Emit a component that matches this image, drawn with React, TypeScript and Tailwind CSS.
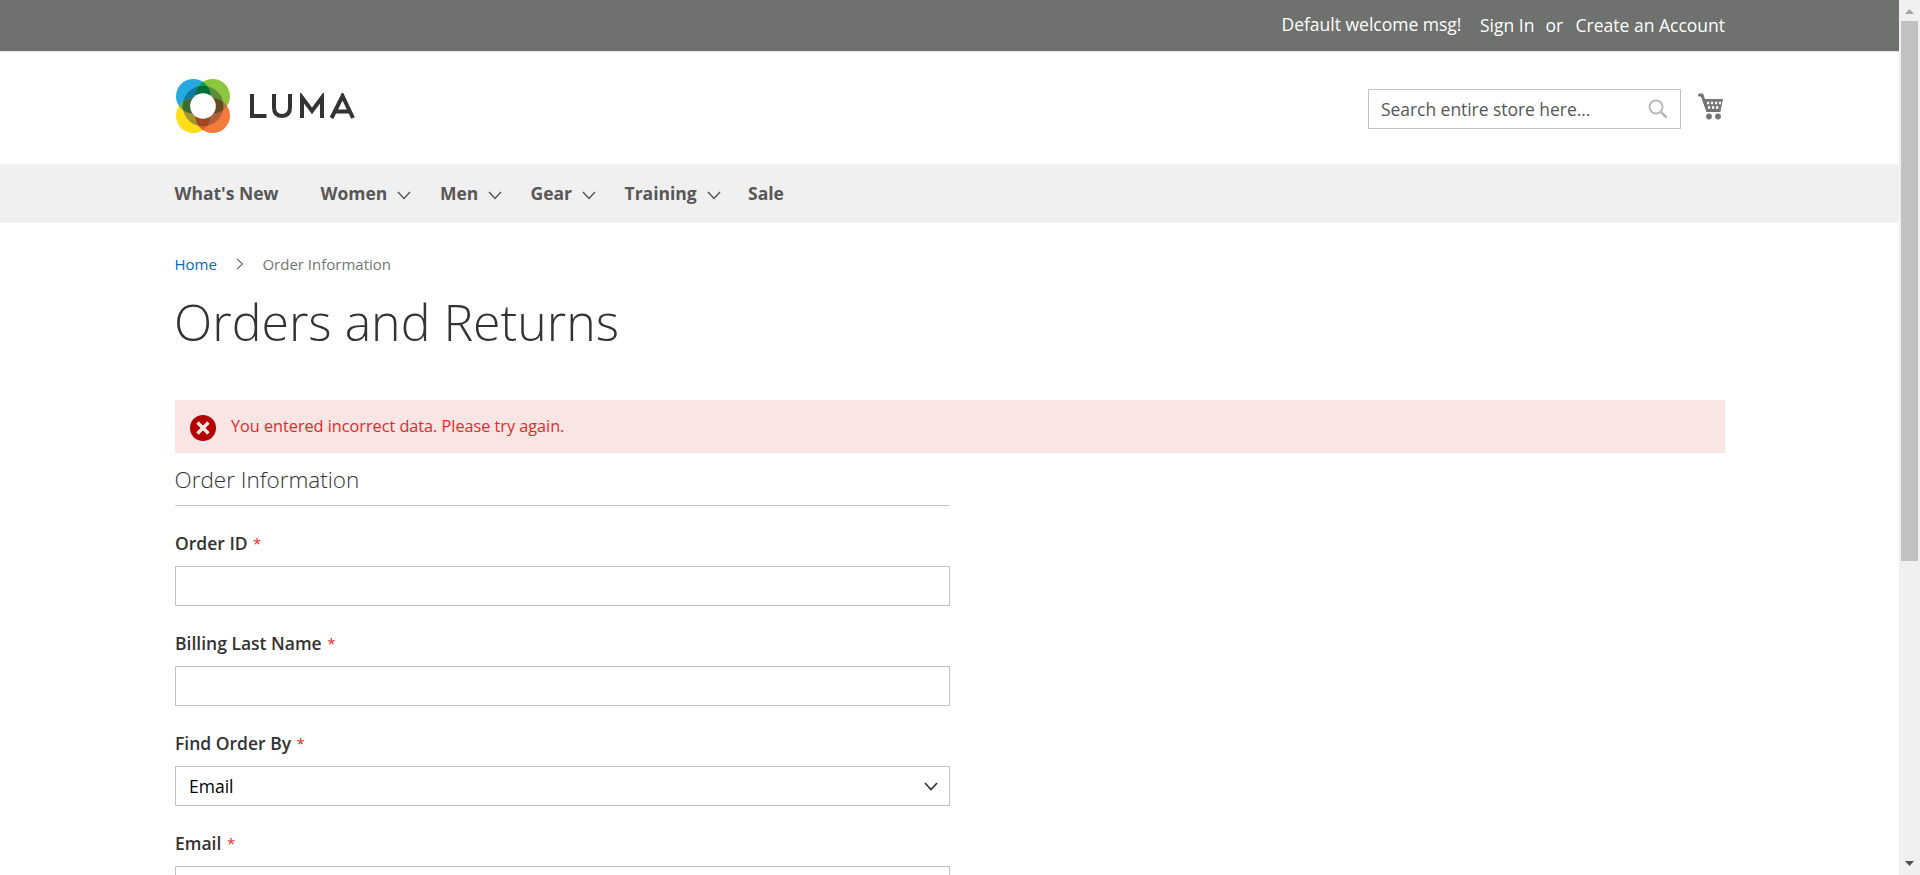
import React from "react";

function Chevron({ className, points = "1,1 7,7.5 13,1", w = 14, h = 9, sw = 1.5 }: { className?: string; points?: string; w?: number; h?: number; sw?: number }) {
  return (
    <svg width={w} height={h} viewBox={`0 0 ${w} ${h}`} className={className} fill="none" stroke="currentColor" strokeWidth={sw}>
      <polyline points={points} />
    </svg>
  );
}

function LogoMark() {
  return (
    <svg width="54" height="54" viewBox="0 0 162 162">
      <defs>
        <clipPath id="blue"><circle cx="52" cy="52" r="52" /></clipPath>
        <clipPath id="green"><circle cx="110" cy="52" r="52" /></clipPath>
        <clipPath id="yellow"><circle cx="52" cy="110" r="52" /></clipPath>
        <clipPath id="orange"><circle cx="110" cy="110" r="52" /></clipPath>
      </defs>
      <circle cx="52" cy="52" r="52" fill="#26a9e0" />
      <circle cx="110" cy="52" r="52" fill="#8cc63f" />
      <circle cx="52" cy="110" r="52" fill="#ffde17" />
      <circle cx="110" cy="110" r="52" fill="#f47b3b" />
      <circle cx="110" cy="52" r="52" fill="#00a651" clipPath="url(#blue)" />
      <circle cx="52" cy="110" r="52" fill="#6fae45" clipPath="url(#blue)" />
      <circle cx="110" cy="110" r="52" fill="#b0763a" clipPath="url(#green)" />
      <circle cx="110" cy="110" r="52" fill="#f05a28" clipPath="url(#yellow)" />
      <circle cx="81" cy="81" r="61" fill="#0c7aa3" clipPath="url(#blue)" />
      <circle cx="81" cy="81" r="61" fill="#5b8c3b" clipPath="url(#green)" />
      <circle cx="81" cy="81" r="61" fill="#a8942f" clipPath="url(#yellow)" />
      <circle cx="81" cy="81" r="61" fill="#b0603a" clipPath="url(#orange)" />
      <g clipPath="url(#blue)"><circle cx="81" cy="81" r="61" fill="#006f3a" clipPath="url(#green)" /></g>
      <g clipPath="url(#blue)"><circle cx="81" cy="81" r="61" fill="#3c6b30" clipPath="url(#yellow)" /></g>
      <g clipPath="url(#green)"><circle cx="81" cy="81" r="61" fill="#664a20" clipPath="url(#orange)" /></g>
      <g clipPath="url(#yellow)"><circle cx="81" cy="81" r="61" fill="#a04822" clipPath="url(#orange)" /></g>
      <circle cx="81" cy="81" r="38.5" fill="#fff" />
    </svg>
  );
}

function Wordmark() {
  return (
    <svg width="106" height="26" viewBox="0 0 106 26" fill="none" stroke="#333" strokeWidth="4" role="img" aria-label="LUMA">
      <path d="M3 1V23H17.5" />
      <path d="M25 1V14.500C25 20.500 28 23 33 23S41 20.500 41 14.500V1" />
      <path d="M53 25V4.500L63 18L73 4.500V25" />
      <path d="M82.500 25L93.500 3L104 25M86.500 18.500H100.500" />
    </svg>
  );
}

function CartIcon() {
  return (
    <svg width="26" height="27" viewBox="0 0 26 27" fill="none">
      <path d="M1.500 2H4L9.500 17.500H21" stroke="#757575" strokeWidth="3" strokeLinecap="round" />
      <path d="M5 6H25L22.500 18.500H9Z" fill="#757575" />
      <path d="M9 10H23M10 14.500H22" stroke="#fff" strokeWidth="2.300" strokeDasharray="2.300 1.700" />
      <circle cx="11" cy="23.500" r="2.900" fill="#757575" />
      <circle cx="20" cy="23.500" r="2.900" fill="#757575" />
    </svg>
  );
}

const nav = [
  { label: "What's New", cls: "w-[146px]" },
  { label: "Women", sub: true, cls: "w-[119.500px]" },
  { label: "Men", sub: true, cls: "w-[90.500px]" },
  { label: "Gear", sub: true, cls: "w-[94px]" },
  { label: "Training", sub: true, cls: "w-[123.500px]" },
  { label: "Sale", cls: "" },
];

function Field({ label, children }: { label: string; children?: React.ReactNode }) {
  return (
    <div className="mb-[25px] h-[75px]">
      <label className="flex h-[35px] items-start text-[17.500px] leading-[25px] font-semibold">
        {label}
        <span className="ml-[5.500px] text-[15px] font-normal text-[#e02b27]">*</span>
      </label>
      <div className="flex h-10 items-center justify-between border border-[#c2c2c2] bg-white pr-[11px] pl-[13px]">{children}</div>
    </div>
  );
}

export default function App() {
  return (
    <div className="flex h-[875px] w-[1920px] overflow-hidden bg-white font-['Open_Sans',sans-serif] text-[17.500px] text-[#333]">
      <div className="w-[1899px] shrink-0">
        <div className="h-[52px] border-b border-[#e4e4e4] bg-[#6e716e] pr-[174px] text-white">
          <div className="flex justify-end leading-6">
            <span className="pt-3">Default welcome msg!</span>
            <span className="ml-[18.500px] pt-[13px]">Sign In</span>
            <span className="ml-[11px] pt-[13px]">or</span>
            <span className="ml-[12.500px] pt-[13px]">Create an Account</span>
          </div>
        </div>

        <header className="flex h-[112px] items-start justify-between pr-[175px] pl-[175.500px]">
          <div className="flex items-center pt-[27px]">
            <LogoMark />
            <div className="ml-[19px] h-[26px]"><Wordmark /></div>
          </div>
          <div className="flex items-start pt-[37px]">
            <div className="flex h-10 w-[313px] items-center justify-between border border-[#c2c2c2] pr-3 pl-3 text-[#575757]">
              <span className="tracking-[-0.05px]">Search entire store here...</span>
              <svg width="20" height="20" viewBox="0 0 20 20" fill="none" stroke="#b8b8b8">
                <circle cx="8" cy="8" r="6.500" strokeWidth="2" />
                <path d="M12.800 12.800L18.500 18.500" strokeWidth="2.500" />
              </svg>
            </div>
            <div className="mt-1 ml-[17px]"><CartIcon /></div>
          </div>
        </header>

        <nav className="flex h-[59px] bg-[#f0f0f0] pl-[174.500px] text-[17.500px] leading-[59px] font-bold text-[#575757]">
          {nav.map((n) => (
            <div key={n.label} className={`flex items-center ${n.cls}`}>
              {n.label}
              {n.sub && <Chevron className="mt-[3px] ml-[10px]" />}
            </div>
          ))}
        </nav>

        <main className="pr-[174px] pl-[175px]">
          <div className="flex h-[65px] items-center pt-[17px] text-[15px] leading-5 text-[#757575]">
            <span className="-ml-[0.500px] text-[#006bb4]">Home</span>
            <Chevron w={8} h={12} points="1,1 6.500,6 1,11" sw={1.3} className="mr-[18.500px] ml-[19px]" />
            <span>Order Information</span>
          </div>
          <h1 className="-ml-px h-[112px] text-[50px] leading-[68px] font-light">Orders and Returns</h1>
          <div className="flex h-[53px] items-center bg-[#fae5e5] pl-[15px] text-[16.250px] text-[#e02b27]">
            <svg width="26" height="26" viewBox="0 0 26 26" className="mt-[2px]">
              <circle cx="13" cy="13" r="13" fill="#b30000" />
              <path d="M7.500 7.500L18.500 18.500M18.500 7.500L7.500 18.500" stroke="#fae5e5" strokeWidth="3.500" />
            </svg>
            <span className="ml-[15px] tracking-[-0.020px]">You entered incorrect data. Please try again.</span>
          </div>
          <form className="w-[775px]">
            <h2 className="mb-[25px] h-[53px] border-b border-[#c6c6c6] pt-3 text-[22.500px] leading-[30px] font-light">
              <span className="-ml-[0.500px]">Order Information</span>
            </h2>
            <Field label="Order ID" />
            <Field label="Billing Last Name" />
            <Field label="Find Order By">
              <span className="text-black">Email</span>
              <Chevron className="mt-px text-[#333]" sw={1.7} />
            </Field>
            <Field label="Email" />
          </form>
        </main>
      </div>

      <div className="flex w-[21px] shrink-0 flex-col items-center bg-[#f0f0f0]">
        <svg width="21" height="21" viewBox="0 0 21 21"><path d="M6 14L10.500 9L15 14Z" fill="#a3a3a3" /></svg>
        <div className="h-[540px] w-[17px] bg-[#c1c1c1]" />
        <svg width="21" height="21" viewBox="0 0 21 21" className="mt-auto"><path d="M6 7H15L10.500 12Z" fill="#505050" /></svg>
      </div>
    </div>
  );
}
